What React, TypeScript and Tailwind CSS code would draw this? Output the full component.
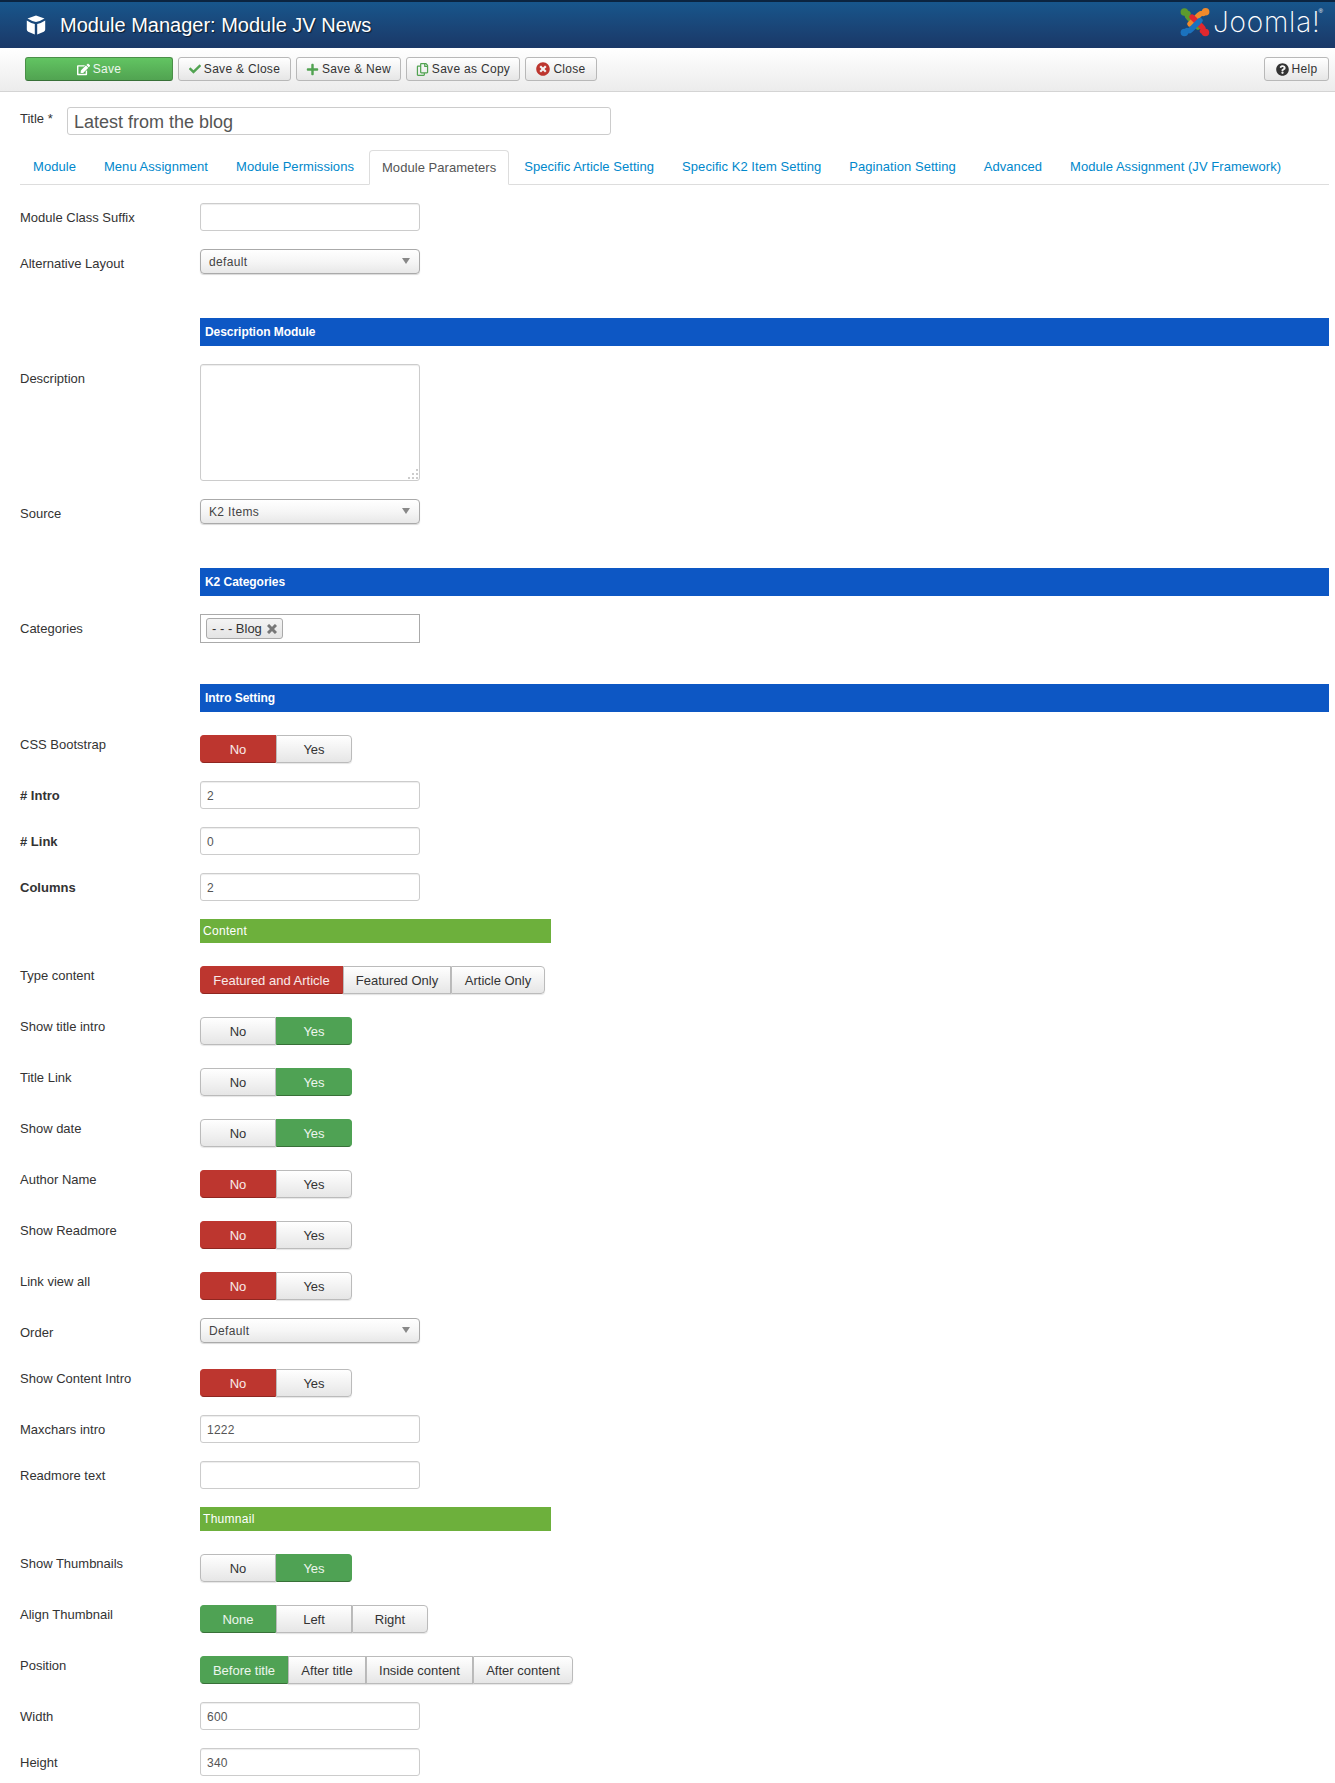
import React from 'react';
import {
  FaCheck,
  FaPlus,
  FaRegCopy,
  FaEdit,
  FaTimesCircle,
  FaQuestionCircle,
} from 'react-icons/fa';

function CubeIcon() {
  return (
    <svg viewBox="0 0 20 20" className="h-[20px] w-[20px]" fill="#fff">
      <path d="M10 0.5 L18.5 3.6 Q14 6.5 10 7 Q6 6.5 1.5 3.6 Z" />
      <path d="M0.8 5.6 Q4.5 8.2 8.8 9 V19.5 L2.2 16.8 Q0.8 16.2 0.8 14.6 Z" />
      <path d="M19.2 5.6 Q15.5 8.2 11.2 9 V19.5 L17.8 16.8 Q19.2 16.2 19.2 14.6 Z" />
    </svg>
  );
}

function JoomlaMark() {
  return (
    <svg viewBox="0 0 30 30" className="h-[30px] w-[30px]" fill="none" strokeWidth="5.4" strokeLinecap="round" strokeLinejoin="round">
      <path d="M18 20 L8.5 10.5 Q6 8 8 6.5" stroke="#5d9a2e" />
      <circle cx="4.4" cy="5" r="3.8" fill="#5d9a2e" />
      <path d="M10 17 L19 8 Q21 6 23 6.5" stroke="#f08a2b" />
      <circle cx="25.6" cy="4.8" r="3.8" fill="#f08a2b" />
      <path d="M12 10 L21.5 19.5 Q24 22 22.5 24" stroke="#e0282e" />
      <circle cx="25.4" cy="25.5" r="3.8" fill="#e0282e" />
      <path d="M20 13.5 L11 22.5 Q9 24.5 7 23.5" stroke="#1b72bd" />
      <circle cx="4.4" cy="25.5" r="3.8" fill="#1b72bd" />
    </svg>
  );
}

function ToolButton({
  width,
  icon,
  label,
  primary,
}: {
  width: string;
  icon: React.ReactNode;
  label: string;
  primary?: boolean;
}) {
  return (
    <button
      type="button"
      className={[
        'flex h-[24px] items-center justify-center gap-[3px] rounded-[3px] border text-[12px] tracking-[0.3px]',
        width,
        primary
          ? 'border-[#4a8f48] border-b-[#387038] bg-linear-to-b from-[#62c462] to-[#51a351] text-white/90'
          : 'border-[#b8b8b8] bg-linear-to-b from-white to-[#e6e6e6] text-[#333]',
      ].join(' ')}
    >
      {icon}
      {label}
    </button>
  );
}

function Row({
  label,
  bold,
  flush,
  className,
  children,
}: {
  label?: string;
  bold?: boolean;
  flush?: boolean;
  className: string;
  children: React.ReactNode;
}) {
  return (
    <div className={`flex items-start ${className}`}>
      <label
        className={[
          'w-[180px] shrink-0 text-[13px] leading-[18px] text-[#333]',
          flush ? 'pt-px' : 'pt-[6px]',
          bold ? 'font-bold' : '',
        ].join(' ')}
      >
        {label}
      </label>
      {children}
    </div>
  );
}

function TextInput({ value }: { value?: string }) {
  return (
    <input
      readOnly
      value={value ?? ''}
      className="h-[28px] w-[220px] rounded-[3px] border border-[#ccc] bg-white px-[6px] pt-px text-[12px] tracking-[0.25px] text-[#555] shadow-[inset_0_1px_1px_rgba(0,0,0,0.075)] outline-none"
    />
  );
}

function SelectBox({ value }: { value: string }) {
  return (
    <div className="flex h-[25px] w-[220px] items-center justify-between rounded-[4px] border border-[#aaa] bg-linear-to-b from-white via-[#f6f6f6] to-[#e8e8e8] pt-px pr-[9px] pl-[8px] text-[12px] tracking-[0.35px] text-[#444] shadow-[0_1px_1px_rgba(0,0,0,0.15)]">
      {value}
      <span className="mb-[2px] h-0 w-0 border-x-[4px] border-t-[6px] border-x-transparent border-t-[#888]" />
    </div>
  );
}

function BlueBar({ title }: { title: string }) {
  return (
    <div className="flex h-[28px] flex-1 items-center bg-[#0d57c4] px-[5px] text-[12px] font-bold tracking-[-0.05px] text-white">
      {title}
    </div>
  );
}

function GreenBar({ title }: { title: string }) {
  return (
    <div className="flex h-[24px] w-[351px] items-center bg-[#6db03c] px-[3px] text-[12px] tracking-[0.3px] text-white">
      {title}
    </div>
  );
}

type Option = { text: string; width: string };

const NO_YES: Option[] = [
  { text: 'No', width: 'w-[76px]' },
  { text: 'Yes', width: 'w-[76px]' },
];

function Toggle({
  options,
  active,
  tone,
}: {
  options: Option[];
  active: number;
  tone: 'red' | 'green';
}) {
  return (
    <div className="flex">
      {options.map((option, i) => (
        <div
          key={option.text}
          className={[
            'flex h-[28px] items-center justify-center border pt-px text-[13px]',
            option.width,
            i === 0 ? 'rounded-l-[4px]' : '',
            i === options.length - 1 ? 'rounded-r-[4px]' : '',
            i === active
              ? tone === 'red'
                ? 'border-[#bd362f] border-b-[#8f2620] bg-[#bd362f] text-white/90'
                : 'border-[#4fa254] border-b-[#387038] bg-[#4fa254] text-white/90'
              : 'border-[#bbb] bg-linear-to-b from-white to-[#e6e6e6] text-[#333] shadow-[0_1px_1px_rgba(0,0,0,0.1)]',
          ].join(' ')}
        >
          {option.text}
        </div>
      ))}
    </div>
  );
}

const TABS = [
  'Module',
  'Menu Assignment',
  'Module Permissions',
  'Module Parameters',
  'Specific Article Setting',
  'Specific K2 Item Setting',
  'Pagination Setting',
  'Advanced',
  'Module Assignment (JV Framework)',
];

export default function App() {
  return (
    <div className="min-h-[1783px] bg-white font-['Liberation_Sans',Arial,sans-serif] text-[#333]">
      <header className="flex h-[48px] items-center border-t-2 border-[#0b2440] bg-linear-to-b from-[#17568c] to-[#1a3867] pr-[12px] pl-[26px] text-white">
        <CubeIcon />
        <h1 className="ml-[14px] text-[20px] leading-none [text-shadow:1px_1px_1px_rgba(0,0,0,0.6)]">
          Module Manager: Module JV News
        </h1>
        <div className="mb-[6px] ml-auto flex items-center gap-[3px]">
          <JoomlaMark />
          <span className="font-['Inter',sans-serif] text-[28px] leading-none font-extralight tracking-[0.8px]">
            Joomla!
          </span>
          <sup className="-mt-[16px] -ml-[5px] text-[6px]">®</sup>
        </div>
      </header>

      <div className="flex h-[44px] items-start gap-[5px] border-b border-[#d4d4d4] bg-linear-to-b from-white to-[#ececec] pt-[9px] pr-[6px] pl-[25px]">
        <ToolButton primary width="w-[148px]" label="Save" icon={<FaEdit className="text-[13px] text-white" />} />
        <ToolButton width="w-[113px]" label="Save & Close" icon={<FaCheck className="text-[12px] text-[#51a351]" />} />
        <ToolButton width="w-[105px]" label="Save & New" icon={<FaPlus className="text-[13px] text-[#51a351]" />} />
        <ToolButton width="w-[114px]" label="Save as Copy" icon={<FaRegCopy className="text-[13px] text-[#51a351]" />} />
        <ToolButton width="w-[72px]" label="Close" icon={<FaTimesCircle className="text-[14px] text-[#bd362f]" />} />
        <div className="ml-auto">
          <ToolButton width="w-[65px]" label="Help" icon={<FaQuestionCircle className="text-[13px] text-[#333]" />} />
        </div>
      </div>

      <main className="pt-[15px] pr-[6px] pb-[7px] pl-[20px]">
        <div className="flex items-start">
          <label className="w-[47px] pt-[3px] text-[13px] leading-[18px]">Title *</label>
          <input
            readOnly
            value="Latest from the blog"
            className="h-[28px] w-[544px] rounded-[3px] border border-[#ccc] px-[6px] pt-[2px] text-[18px] text-[#555] outline-none"
          />
        </div>

        <nav className="mt-[15px] mb-[18px] flex h-[35px] gap-[2px] border-b border-[#ddd]">
          {TABS.map((tab) =>
            tab === 'Module Parameters' ? (
              <a key={tab} className="-mb-px flex h-[35px] items-center rounded-t-[4px] border border-[#ddd] border-b-white bg-white px-[12px] text-[13px] tracking-[0.05px] text-[#555]">
                {tab}
              </a>
            ) : (
              <a key={tab} className="flex h-[34px] items-center border border-transparent px-[12px] text-[13px] tracking-[0.05px] text-[#08c]">
                {tab}
              </a>
            ),
          )}
        </nav>

        <Row label="Module Class Suffix" className="mb-[18px]"><TextInput /></Row>
        <Row label="Alternative Layout" className="mb-[44px]"><SelectBox value="default" /></Row>
        <Row className="mb-[18px]"><BlueBar title="Description Module" /></Row>
        <Row label="Description" className="mb-[18px]">
          <div className="relative">
            <textarea readOnly className="block h-[117px] w-[220px] resize-none rounded-[3px] border border-[#ccc] shadow-[inset_0_1px_1px_rgba(0,0,0,0.075)] outline-none" />
            <svg viewBox="0 0 12 12" className="absolute right-[1px] bottom-[1px] h-[12px] w-[12px]" fill="#ccc">
              <rect x="9" y="1" width="2" height="2" />
              <rect x="5" y="5" width="2" height="2" />
              <rect x="9" y="5" width="2" height="2" />
              <rect x="1" y="9" width="2" height="2" />
              <rect x="5" y="9" width="2" height="2" />
              <rect x="9" y="9" width="2" height="2" />
            </svg>
          </div>
        </Row>
        <Row label="Source" className="mb-[44px]"><SelectBox value="K2 Items" /></Row>
        <Row className="mb-[18px]"><BlueBar title="K2 Categories" /></Row>
        <Row label="Categories" className="mb-[41px]">
          <div className="flex h-[29px] w-[220px] items-center border border-[#aaa] bg-white pl-[5px]">
            <span className="flex h-[21px] w-[77px] items-center gap-[5px] rounded-[3px] border border-[#aaa] bg-linear-to-b from-[#f4f4f4] to-[#e4e4e4] pl-[5px] text-[13px] text-[#333]">
              - - - Blog
              <svg viewBox="0 0 10 10" className="h-[10px] w-[10px]" stroke="#777" strokeWidth="3"><path d="M1 1 L9 9 M9 1 L1 9" /></svg>
            </span>
          </div>
        </Row>
        <Row className="mb-[23px]"><BlueBar title="Intro Setting" /></Row>
        <Row label="CSS Bootstrap" flush className="mb-[18px]"><Toggle options={NO_YES} active={0} tone="red" /></Row>
        <Row label="# Intro" bold className="mb-[18px]"><TextInput value="2" /></Row>
        <Row label="# Link" bold className="mb-[18px]"><TextInput value="0" /></Row>
        <Row label="Columns" bold className="mb-[18px]"><TextInput value="2" /></Row>
        <Row className="mb-[23px]"><GreenBar title="Content" /></Row>
        <Row label="Type content" flush className="mb-[23px]">
          <Toggle
            active={0}
            tone="red"
            options={[
              { text: 'Featured and Article', width: 'w-[143px]' },
              { text: 'Featured Only', width: 'w-[108px]' },
              { text: 'Article Only', width: 'w-[94px]' },
            ]}
          />
        </Row>
        <Row label="Show title intro" flush className="mb-[23px]"><Toggle options={NO_YES} active={1} tone="green" /></Row>
        <Row label="Title Link" flush className="mb-[23px]"><Toggle options={NO_YES} active={1} tone="green" /></Row>
        <Row label="Show date" flush className="mb-[23px]"><Toggle options={NO_YES} active={1} tone="green" /></Row>
        <Row label="Author Name" flush className="mb-[23px]"><Toggle options={NO_YES} active={0} tone="red" /></Row>
        <Row label="Show Readmore" flush className="mb-[23px]"><Toggle options={NO_YES} active={0} tone="red" /></Row>
        <Row label="Link view all" flush className="mb-[18px]"><Toggle options={NO_YES} active={0} tone="red" /></Row>
        <Row label="Order" className="mb-[26px]"><SelectBox value="Default" /></Row>
        <Row label="Show Content Intro" flush className="mb-[18px]"><Toggle options={NO_YES} active={0} tone="red" /></Row>
        <Row label="Maxchars intro" className="mb-[18px]"><TextInput value="1222" /></Row>
        <Row label="Readmore text" className="mb-[18px]"><TextInput /></Row>
        <Row className="mb-[23px]"><GreenBar title="Thumnail" /></Row>
        <Row label="Show Thumbnails" flush className="mb-[23px]"><Toggle options={NO_YES} active={1} tone="green" /></Row>
        <Row label="Align Thumbnail" flush className="mb-[23px]">
          <Toggle
            active={0}
            tone="green"
            options={[
              { text: 'None', width: 'w-[76px]' },
              { text: 'Left', width: 'w-[76px]' },
              { text: 'Right', width: 'w-[76px]' },
            ]}
          />
        </Row>
        <Row label="Position" flush className="mb-[18px]">
          <Toggle
            active={0}
            tone="green"
            options={[
              { text: 'Before title', width: 'w-[88px]' },
              { text: 'After title', width: 'w-[78px]' },
              { text: 'Inside content', width: 'w-[107px]' },
              { text: 'After content', width: 'w-[100px]' },
            ]}
          />
        </Row>
        <Row label="Width" className="mb-[18px]"><TextInput value="600" /></Row>
        <Row label="Height" className="mb-0"><TextInput value="340" /></Row>
      </main>
    </div>
  );
}
